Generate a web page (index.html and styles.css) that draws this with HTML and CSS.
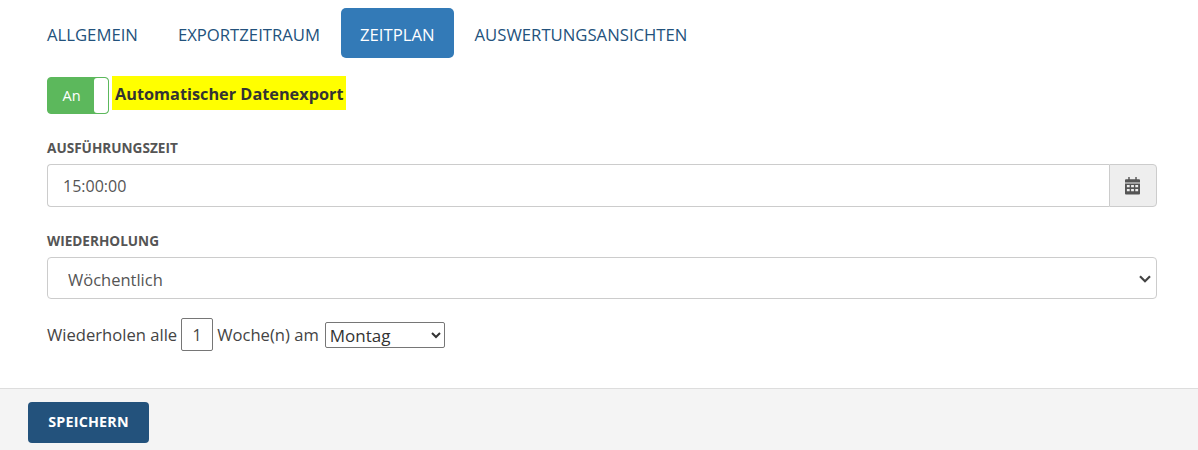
FILE: index.html
```html
<!DOCTYPE html>
<html lang="de">
<head>
<meta charset="utf-8">
<title>Zeitplan</title>
<link rel="stylesheet" href="styles.css">
</head>
<body>
<main class="content">
  <nav class="tabs">
    <a class="tab">ALLGEMEIN</a>
    <a class="tab">EXPORTZEITRAUM</a>
    <a class="tab active">ZEITPLAN</a>
    <a class="tab">AUSWERTUNGSANSICHTEN</a>
  </nav>
  <div class="switch-row">
    <div class="switch"><span class="switch-on">An</span><span class="switch-handle"></span></div>
    <span class="highlight">Automatischer Datenexport</span>
  </div>
  <label class="field-label first">AUSFÜHRUNGSZEIT</label>
  <div class="input-group">
    <input class="time-input" type="text" value="15:00:00">
    <span class="addon">
      <svg class="cal" width="15" height="18" viewBox="0 0 16 18" preserveAspectRatio="none"><path fill="#555" d="M3.500 0h1.500v2.200h6V0h1.500v2.200H15a1 1 0 0 1 1 1V5.400H0V3.200a1 1 0 0 1 1-1h2.500zM0 6.400h16V16.500a1 1 0 0 1-1 1H1a1 1 0 0 1-1-1z"/><path fill="#eee" d="M2 8h3v2.200H2zM6.500 8h3v2.200h-3zM11 8h3v2.200h-3zM2 12h3v2.200H2zM6.500 12h3v2.200h-3zM11 12h3v2.200h-3z"/></svg>
    </span>
  </div>
  <label class="field-label second">WIEDERHOLUNG</label>
  <div class="select-wrap">
    <select class="big-select"><option>Wöchentlich</option></select>
    <svg class="chev" width="12" height="8" viewBox="0 0 12 8"><path d="M1 1.200 6 6.200 11 1.200" fill="none" stroke="#444" stroke-width="2.200"/></svg>
  </div>
  <div class="repeat-row">
    <span>Wiederholen alle</span>
    <input class="num" type="text" value="1">
    <span>Woche(n) am</span>
    <select class="day"><option>Montag</option></select>
  </div>
</main>
<footer class="footer">
  <button class="save" type="button">SPEICHERN</button>
</footer>
</body>
</html>
```
FILE: styles.css
```css
* { box-sizing: border-box; }
html, body { height: 100%; }
body {
  margin: 0;
  height: 450px;
  overflow: hidden;
  display: flex;
  flex-direction: column;
  background: #fff;
  color: #444;
  font-family: "Open Sans", sans-serif;
  font-size: 16.600px;
}
.content { flex: 1; padding: 8px 41px 0 47px; }
.tabs { display: flex; height: 50px; gap: 40px; }
.tab {
  display: flex;
  align-items: center;
  padding-top: 3px;
  font-size: 16.700px;
  color: #23527c;
}
.tab.active {
  background: #337ab7;
  color: #fff;
  border-radius: 5px;
  padding: 3px 19px 0;
  margin: 0 -19px;
}
.switch-row { display: flex; align-items: flex-start; gap: 3px; margin-top: 18px; height: 38px; }
.switch {
  width: 62px;
  height: 37px;
  margin-top: 1px;
  display: flex;
  border: 1px solid #5cb85c;
  border-radius: 4px;
  background: #5cb85c;
  overflow: hidden;
  flex: none;
}
.switch-on { flex: 1; display: flex; align-items: center; justify-content: center; padding-left: 1px; color: #fff; font-size: 14.500px; }
.switch-handle { width: 14px; background: #fff; border-radius: 3px; }
.highlight {
  background: #ff0;
  color: #333;
  font-weight: 700;
  font-size: 16.300px;
  line-height: 34px;
  height: 34px;
  padding: 1px 2px 0 3px;
}
.field-label {
  display: block;
  font-size: 13.600px;
  font-weight: 700;
  color: #555;
  line-height: 16px;
}
.first { margin-top: 26px; }
.second { margin-top: 26px; }
.input-group { display: flex; height: 43px; margin-top: 8px; }
.time-input {
  flex: 1;
  min-width: 0;
  border: 1px solid #ccc;
  border-right: 0;
  border-radius: 4px 0 0 4px;
  padding: 1px 15px 0;
  font: 16px "Open Sans", sans-serif;
  color: #555;
  outline: none;
}
.addon {
  width: 48px;
  display: flex;
  align-items: center;
  justify-content: center;
  padding-right: 2px;
  background: #eee;
  border: 1px solid #ccc;
  border-radius: 0 4px 4px 0;
}
.select-wrap { position: relative; margin-top: 8px; height: 42px; }
.big-select {
  width: 100%;
  height: 100%;
  appearance: none;
  background: #fff;
  border: 1px solid #ccc;
  border-radius: 4px;
  padding: 2px 20px 0;
  font: 16.500px "Open Sans", sans-serif;
  color: #555;
}
.chev { position: absolute; right: 6px; top: 18px; }
.repeat-row { display: flex; align-items: center; gap: 4px; margin-top: 19px; height: 33px; color: #444; }
.num {
  width: 32px;
  height: 33px;
  border: 1px solid #767676;
  border-radius: 2px;
  text-align: center;
  font: 16px "Open Sans", sans-serif;
  color: #444;
  padding: 0;
}
.day {
  width: 120px;
  height: 26px;
  margin-left: 2px;
  font: 17px "Open Sans", sans-serif;
  color: #333;
  background: #fff;
  border: 1px solid #767676;
  border-radius: 2px;
}
.footer {
  flex: none;
  height: 62px;
  padding: 13px 28px 0;
  background: #f4f4f4;
  border-top: 1px solid #ddd;
}
.save {
  width: 121px;
  height: 41px;
  padding: 0 0 2px;
  border: 0;
  border-radius: 4px;
  background: #23527c;
  color: #fff;
  font: 700 14.300px "Open Sans", sans-serif;
  letter-spacing: 0.2px;
}
```
